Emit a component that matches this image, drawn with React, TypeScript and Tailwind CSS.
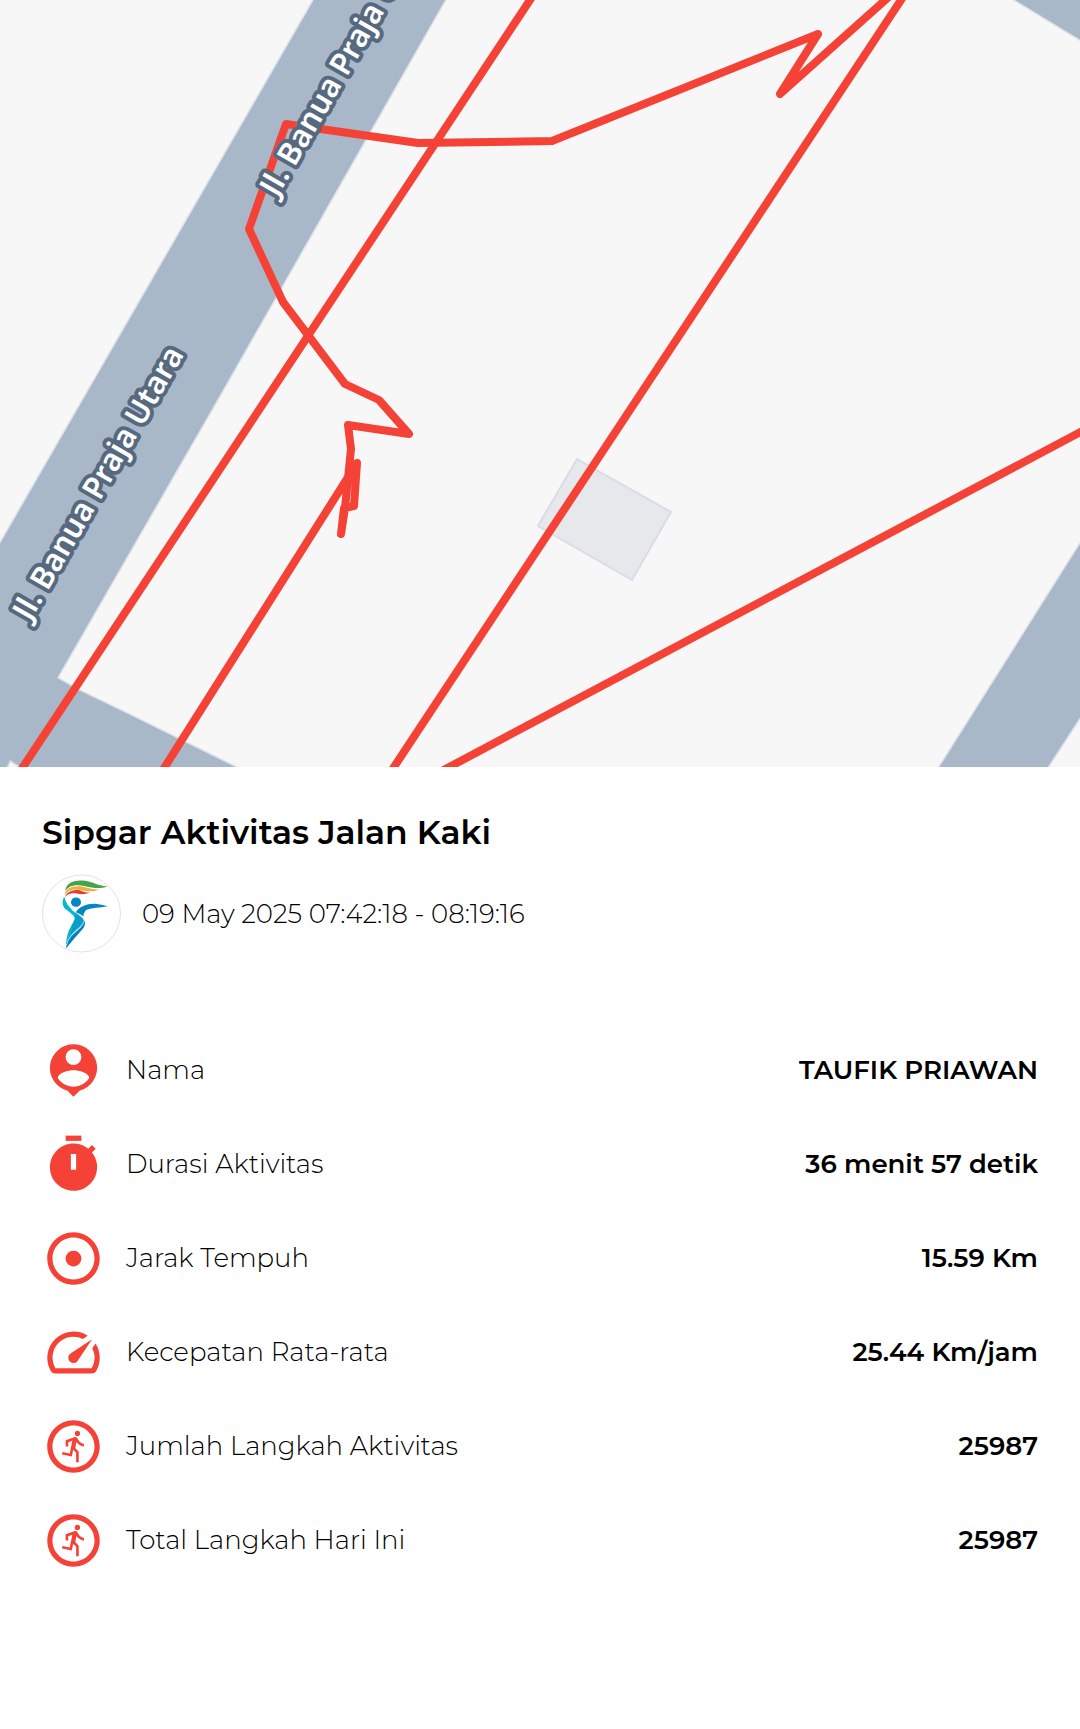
import type { ReactNode } from "react";
import { MdAdjust, MdOutlineRunCircle, MdOutlineSpeed } from "react-icons/md";

const HALO = "#56697f";

function StreetLabel({ x, y }: { x: number; y: number }) {
  return (
    <text
      transform={`translate(${x} ${y}) rotate(-60)`}
      fill="#ffffff"
      stroke={HALO}
      strokeWidth={8}
      strokeLinejoin="round"
      paintOrder="stroke"
      className="font-['Noto_Sans',sans-serif] text-[31px] font-semibold"
    >
      Jl. Banua Praja Utara
    </text>
  );
}

function RouteMap() {
  return (
    <svg viewBox="0 0 1080 767" className="block w-full" role="img" aria-label="Peta rute aktivitas">
      <rect width="1080" height="767" fill="#f7f7f7" />
      <g fill="#a9b8c9" stroke="#a9b8c9" strokeOpacity="0.35" strokeWidth="3">
        <path d="M315 -2 L83 400 L-4 551 V771 H5 L10 760 L27 771 H242 L235 767 L130 715 L78 690 L57 678 L217 400 L446 -2 Z" />
        <path d="M1012 -2 L1084 42 V-2 Z" />
        <path d="M1084 538 L939 768 L937 771 H1045 L1084 711 Z" />
      </g>
      <path d="M577 459 L671 512 L632 580 L538 526 Z" fill="#e7e8ec" stroke="#d9dbe9" strokeWidth="2" />
      <g fill="none" stroke="#f44336" strokeWidth="8" strokeLinejoin="round">
        <path d="M534 -6 L19 773" />
        <path d="M905 -6 L390 773" />
        <path d="M1086 429 L438 773" />
        <path d="M892 -6 L780 94 L818 34 L552 141 L418 143 L286 124 L249 229 L283 302 L345 384 L379 400 L409 434 L348 425 L351 449 L345 508 L341 534 L344 508 L354 506 L357 463 L161 773" />
      </g>
      <StreetLabel x={30} y={622} />
      <StreetLabel x={277} y={198} />
    </svg>
  );
}

function TorchRunnerLogo() {
  return (
    <svg viewBox="21 14 237 234" className="size-[79px] shrink-0" role="img" aria-label="Sipgar">
      <ellipse cx="139.500" cy="131" rx="117" ry="115.500" fill="#fff" stroke="#c4c4c4" strokeWidth="1.500" />
      <path fill="#43a548" d="M91 64 C91 43 112 31 140 32 C170 33 185 48 218 50 C195 57 175 55 150 49 C120 42 100 48 91 64Z" />
      <path fill="#f3ae35" d="M89 76 C90 54 115 46 140 50 C160 54 175 60 193 59 C175 67 155 65 140 61 C115 56 99 60 89 76Z" />
      <path fill="#df4138" d="M91 82 C92 66 115 58 135 61 C145 65 155 69 165 68 C150 75 135 73 125 71 C110 69 98 71 91 82Z" />
      <ellipse cx="123" cy="97" rx="15" ry="14" fill="#0785c2" />
      <path fill="#0785c2" d="M122 127 C135 110 155 101 180 102 C195 103 205 107 218 109 C195 114 170 113 155 120 C149 125 146 131 145 140 C138 133 130 130 122 127Z" />
      <path fill="#0d7dbd" d="M149 150 C151 160 151 170 141 180 C125 198 110 215 93 236 C95 215 105 200 130 180 C142 170 148 160 149 150Z" />
      <path fill="#08b5d0" d="M88 81 C80 93 82 107 90 117 C105 128 120 138 119 148 C112 165 98 180 95 208 C93 218 93 224 94 228 C97 212 108 195 127 179 C140 168 148 160 147 152 C145 142 127 132 114 122 C98 108 92 98 88 81Z" />
      <path fill="#0785c2" d="M119 148 C108 166 114 186 97 212 C105 197 115 188 127 179 C140 168 148 160 147 152 C145 144 135 137 124 129 C118 132 124 139 119 148Z" opacity="0.45" />
      <path fill="none" stroke="#fff" strokeWidth="1.500" d="M110 120 C128 134 147 142 147 153 C145 166 124 178 110 195 C101 206 97 215 95 226" />
    </svg>
  );
}

function PersonPinIcon() {
  return (
    <svg viewBox="0 0 24 24" fill="currentColor" className="size-full">
      <path
        fillRule="evenodd"
        d="M12 2a9 9 0 0 0-2.300 17.700L12 22l2.300-2.300A9 9 0 0 0 12 2Zm0 1.900a3 3 0 1 1 0 6 3 3 0 0 1 0-6Zm6 11C16.700 16.900 14.500 18.200 12 18.200S7.300 16.900 6 14.900C6 12.900 10 11.900 12 11.900s6 1 6 3Z"
      />
    </svg>
  );
}

function StopwatchIcon() {
  return (
    <svg viewBox="0 0 24 24" fill="currentColor" className="size-full">
      <path d="M9 1h6v2H9z" />
      <path
        fillRule="evenodd"
        d="M19.030 7.390 20.450 5.970 19.040 4.560 17.620 5.980A9 9 0 1 0 19.030 7.390ZM11 8h2v6h-2z"
      />
    </svg>
  );
}

const stats: { label: string; value: string; icon: ReactNode }[] = [
  { label: "Nama", value: "TAUFIK PRIAWAN", icon: <PersonPinIcon /> },
  { label: "Durasi Aktivitas", value: "36 menit 57 detik", icon: <StopwatchIcon /> },
  { label: "Jarak Tempuh", value: "15.59 Km", icon: <MdAdjust className="size-full" /> },
  { label: "Kecepatan Rata-rata", value: "25.44 Km/jam", icon: <MdOutlineSpeed className="size-full" /> },
  { label: "Jumlah Langkah Aktivitas", value: "25987", icon: <MdOutlineRunCircle className="size-full" /> },
  { label: "Total Langkah Hari Ini", value: "25987", icon: <MdOutlineRunCircle className="size-full" /> },
];

export default function App() {
  return (
    <main className="min-h-screen bg-white font-[Montserrat,Inter,sans-serif] text-black">
      <RouteMap />
      <section className="px-[42px] pt-[45px]">
        <h1 className="text-[33px] leading-10 font-semibold">Sipgar Aktivitas Jalan Kaki</h1>
        <div className="mt-[22px] flex items-center gap-[21px]">
          <TorchRunnerLogo />
          <p className="text-[26px] leading-8 font-light">09 May 2025 07:42:18 - 08:19:16</p>
        </div>
        <dl className="mt-[70px]">
          {stats.map(({ label, value, icon }) => (
            <div key={label} className="flex h-[94px] items-center">
              <dt className="flex items-center gap-[21px] text-[26px] leading-8 font-light">
                <span className="size-[63px] shrink-0 text-[#f44336]" aria-hidden="true">
                  {icon}
                </span>
                {label}
              </dt>
              <dd className="ml-auto text-right text-[26px] leading-8 font-semibold">{value}</dd>
            </div>
          ))}
        </dl>
      </section>
    </main>
  );
}
